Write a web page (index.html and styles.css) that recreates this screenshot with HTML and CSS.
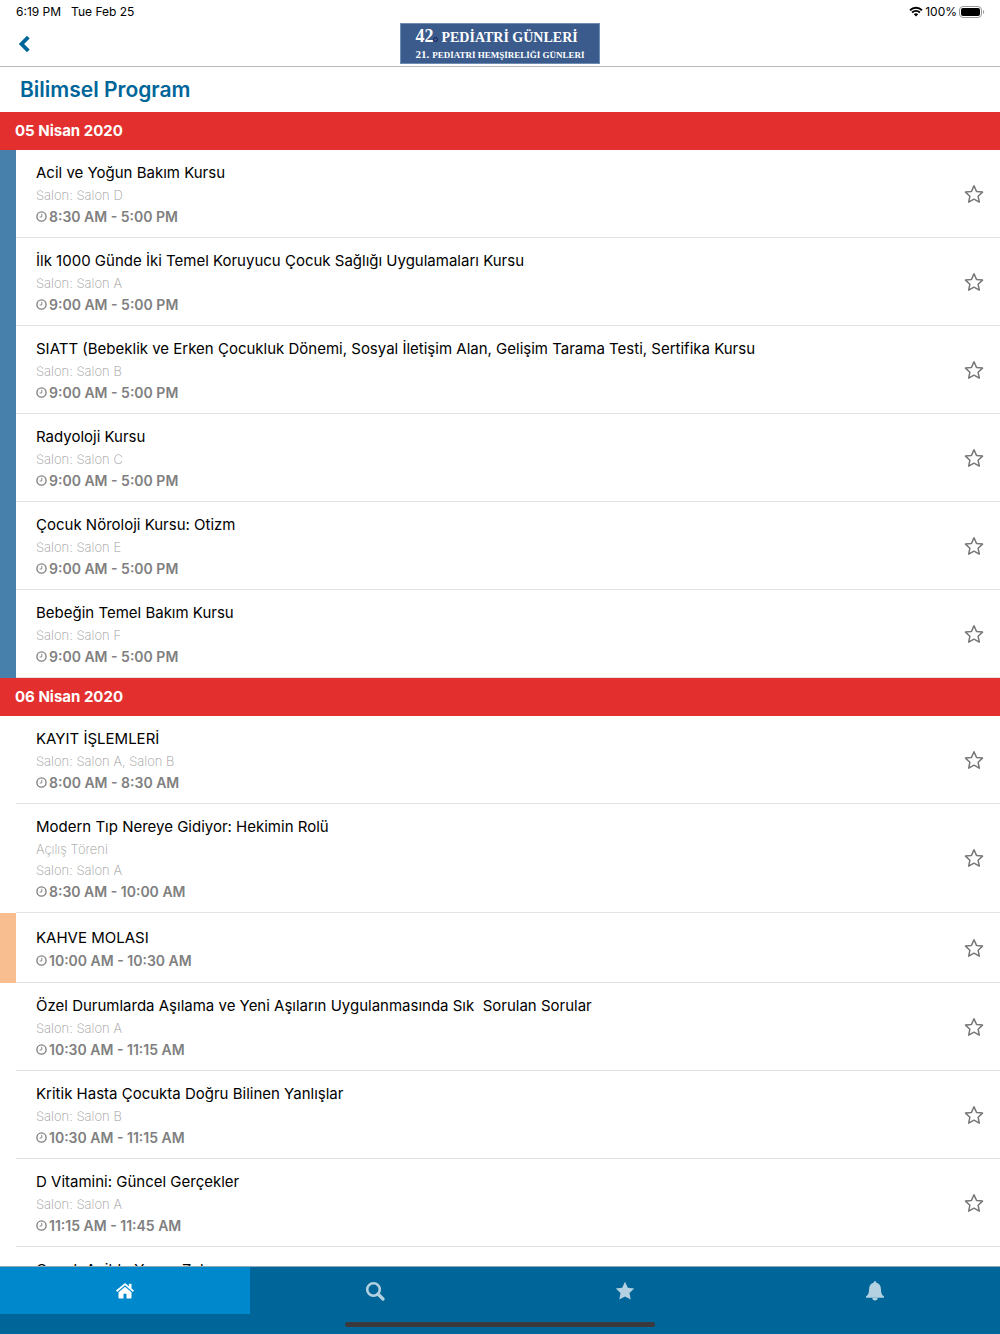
FILE: index.html
```html
<!DOCTYPE html>
<html lang="tr">
<head>
  <meta charset="UTF-8" />
  <meta name="viewport" content="width=device-width, initial-scale=1.0"/>
  <title>Bilimsel Program</title>
  <link rel="stylesheet" href="styles.css">
</head>
<body>

  <!-- Shared icons -->
  <svg class="hidden">
    <symbol id="star" viewBox="0 0 20 20">
      <path d="M10 1.800l2.500 5.600 6 .7-4.400 4.100 1.200 6-5.300-3-5.300 3 1.200-6L1.500 8.100l6-.7z" fill="none" stroke="#777" stroke-width="1.500" stroke-linejoin="round"/>
    </symbol>
    <symbol id="clock" viewBox="0 0 12 12">
      <circle cx="6" cy="6" r="5" fill="none" stroke="#808080" stroke-width="1.500"/>
      <path d="M6.300 3v3.500H4" fill="none" stroke="#808080" stroke-width="1"/>
    </symbol>
  </svg>

  <!-- Status Bar -->
  <div class="status">
    <span>6:19 PM</span>
    <span>Tue Feb 25</span>
    <div class="status-right">
      <svg width="14" height="11" viewBox="0 0 14 11">
        <path d="M1 4.200a8.700 8.700 0 0 1 12 0M3.100 6.500a5.600 5.600 0 0 1 7.800 0" fill="none" stroke="#000" stroke-width="1.900"/>
        <path d="M4.800 8.300a3.200 3.200 0 0 1 4.400 0L7 10.600z"/>
      </svg>
      <span>100%</span>
      <svg width="26" height="12" viewBox="0 0 26 12">
        <rect x=".5" y=".5" width="22" height="11" rx="3.500" fill="none" stroke="#999"/>
        <rect x="2" y="2" width="19" height="8" rx="2"/>
        <path d="M24 4v4c1.600-.6 1.600-3.400 0-4z" fill="#999"/>
      </svg>
    </div>
  </div>

  <!-- Header -->
  <header class="header">
    <button class="back" aria-label="Geri">
      <svg width="12" height="18" viewBox="0 0 12 18"><path d="M10.300 2.200L3.500 9l6.800 6.800" fill="none" stroke="#006699" stroke-width="3.800"/></svg>
    </button>
    <div class="logo">
      <div class="logo-top"><b>42</b><i></i> PEDİATRİ GÜNLERİ</div>
      <div class="logo-bottom"><b>21.</b> PEDİATRİ HEMŞİRELİĞİ GÜNLERİ</div>
    </div>
  </header>
  <h1>Bilimsel Program</h1>

  <!-- Program List -->
  <main>
    <h2>05 Nisan 2020</h2>
    <div class="row blue">
      <div class="info">
        <h3>Acil ve Yoğun Bakım Kursu</h3>
        <p>Salon: Salon D</p>
        <div class="time"><svg><use href="#clock"/></svg>8:30 AM - 5:00 PM</div>
      </div>
      <button class="fav" aria-label="Favori"><svg><use href="#star"/></svg></button>
    </div>
    <div class="row blue">
      <div class="info">
        <h3>İlk 1000 Günde İki Temel Koruyucu Çocuk Sağlığı Uygulamaları Kursu</h3>
        <p>Salon: Salon A</p>
        <div class="time"><svg><use href="#clock"/></svg>9:00 AM - 5:00 PM</div>
      </div>
      <button class="fav" aria-label="Favori"><svg><use href="#star"/></svg></button>
    </div>
    <div class="row blue">
      <div class="info">
        <h3>SIATT (Bebeklik ve Erken Çocukluk Dönemi, Sosyal İletişim Alan, Gelişim Tarama Testi, Sertifika Kursu</h3>
        <p>Salon: Salon B</p>
        <div class="time"><svg><use href="#clock"/></svg>9:00 AM - 5:00 PM</div>
      </div>
      <button class="fav" aria-label="Favori"><svg><use href="#star"/></svg></button>
    </div>
    <div class="row blue">
      <div class="info">
        <h3>Radyoloji Kursu</h3>
        <p>Salon: Salon C</p>
        <div class="time"><svg><use href="#clock"/></svg>9:00 AM - 5:00 PM</div>
      </div>
      <button class="fav" aria-label="Favori"><svg><use href="#star"/></svg></button>
    </div>
    <div class="row blue">
      <div class="info">
        <h3>Çocuk Nöroloji Kursu: Otizm</h3>
        <p>Salon: Salon E</p>
        <div class="time"><svg><use href="#clock"/></svg>9:00 AM - 5:00 PM</div>
      </div>
      <button class="fav" aria-label="Favori"><svg><use href="#star"/></svg></button>
    </div>
    <div class="row blue">
      <div class="info">
        <h3>Bebeğin Temel Bakım Kursu</h3>
        <p>Salon: Salon F</p>
        <div class="time"><svg><use href="#clock"/></svg>9:00 AM - 5:00 PM</div>
      </div>
      <button class="fav" aria-label="Favori"><svg><use href="#star"/></svg></button>
    </div>

    <h2>06 Nisan 2020</h2>
    <div class="row">
      <div class="info">
        <h3>KAYIT İŞLEMLERİ</h3>
        <p>Salon: Salon A, Salon B</p>
        <div class="time"><svg><use href="#clock"/></svg>8:00 AM - 8:30 AM</div>
      </div>
      <button class="fav" aria-label="Favori"><svg><use href="#star"/></svg></button>
    </div>
    <div class="row">
      <div class="info">
        <h3>Modern Tıp Nereye Gidiyor: Hekimin Rolü</h3>
        <p>Açılış Töreni</p>
        <p>Salon: Salon A</p>
        <div class="time"><svg><use href="#clock"/></svg>8:30 AM - 10:00 AM</div>
      </div>
      <button class="fav" aria-label="Favori"><svg><use href="#star"/></svg></button>
    </div>
    <div class="row orange">
      <div class="info">
        <h3>KAHVE MOLASI</h3>
        <div class="time"><svg><use href="#clock"/></svg>10:00 AM - 10:30 AM</div>
      </div>
      <button class="fav" aria-label="Favori"><svg><use href="#star"/></svg></button>
    </div>
    <div class="row">
      <div class="info">
        <h3>Özel Durumlarda Aşılama ve Yeni Aşıların Uygulanmasında Sık&nbsp; Sorulan Sorular</h3>
        <p>Salon: Salon A</p>
        <div class="time"><svg><use href="#clock"/></svg>10:30 AM - 11:15 AM</div>
      </div>
      <button class="fav" aria-label="Favori"><svg><use href="#star"/></svg></button>
    </div>
    <div class="row">
      <div class="info">
        <h3>Kritik Hasta Çocukta Doğru Bilinen Yanlışlar</h3>
        <p>Salon: Salon B</p>
        <div class="time"><svg><use href="#clock"/></svg>10:30 AM - 11:15 AM</div>
      </div>
      <button class="fav" aria-label="Favori"><svg><use href="#star"/></svg></button>
    </div>
    <div class="row">
      <div class="info">
        <h3>D Vitamini: Güncel Gerçekler</h3>
        <p>Salon: Salon A</p>
        <div class="time"><svg><use href="#clock"/></svg>11:15 AM - 11:45 AM</div>
      </div>
      <button class="fav" aria-label="Favori"><svg><use href="#star"/></svg></button>
    </div>
    <div class="row">
      <div class="info">
        <h3>Çocuk Acilde Yapay Zeka</h3>
      </div>
    </div>
  </main>

  <!-- Tab Bar -->
  <nav class="tabs">
    <a href="#" class="active" aria-label="Ana Sayfa">
      <svg width="18" height="16" viewBox="0 0 18 16"><path d="M9 0L0 7.600l1.100 1.300L9 2.300l7.900 6.600L18 7.600l-2.500-2.100V.8h-2.600v2.500z"/><path d="M9 3.700L2.500 9.200v5.600q0 .7.700.7h4.300v-4.700h3v4.700h4.300q.7 0 .7-.7V9.200z"/></svg>
    </a>
    <a href="#" aria-label="Ara">
      <svg width="20" height="20" viewBox="0 0 20 20"><circle cx="8.500" cy="8.500" r="6.300" fill="none" stroke="currentColor" stroke-width="2.600"/><path d="M13 13l5 5" stroke="currentColor" stroke-width="3.200" stroke-linecap="round"/></svg>
    </a>
    <a href="#" aria-label="Favoriler">
      <svg width="20" height="20" viewBox="0 0 20 20"><path d="M10 .8l2.800 6 6.400.8-4.700 4.500 1.200 6.400L10 15.400l-5.700 3.100 1.200-6.400L.8 7.600l6.400-.8z"/></svg>
    </a>
    <a href="#" aria-label="Bildirimler">
      <svg width="20" height="20" viewBox="0 0 20 20"><path d="M10 .3c.9 0 1.400.6 1.300 1.400 3 .7 4.600 3 4.600 6 0 4.200 1 6.300 3.100 7.900v1.100H1v-1.100c2.100-1.600 3.100-3.700 3.100-7.900 0-3 1.600-5.300 4.600-6C8.600.9 9.100.3 10 .3z"/><path d="M7.300 16.700h5.400a2.700 2.700 0 0 1-5.400 0z"/></svg>
    </a>
    <div class="home-bar"></div>
  </nav>

</body>
</html>
```

FILE: styles.css
```css
* {
  box-sizing: border-box;
}
body {
  margin: 0;
  height: 100vh;
  display: flex;
  flex-direction: column;
  background: #fff;
  color: #000;
  font-family: Inter, sans-serif;
}
h1, h2, h3, p {
  margin: 0;
}
button {
  border: none;
  background: none;
  padding: 0;
  cursor: pointer;
}
svg {
  display: block;
}
.hidden {
  display: none;
}

.status {
  display: flex;
  align-items: center;
  gap: 10px;
  height: 23px;
  padding: 0 15px 0 16px;
  font-size: 12px;
  font-weight: 400;
}
.status-right {
  display: flex;
  align-items: center;
  gap: 2px;
  margin-left: auto;
}

.header {
  display: grid;
  grid-template-columns: 1fr auto 1fr;
  align-items: center;
  height: 44px;
  padding: 0 18px 4px;
  border-bottom: 1px solid #bbb;
}
.back {
  width: 12px;
  height: 18px;
}
.logo {
  padding: 2px 14px;
  border: 1px solid #6f8cb3;
  background: #3a5b8c;
  color: #fff;
  font-family: "Liberation Serif", serif;
  font-weight: 700;
  white-space: nowrap;
}
.logo div {
  display: flex;
  align-items: baseline;
  gap: 3px;
}
.logo-top {
  font-size: 14px;
  line-height: 20px;
}
.logo-top b {
  font-size: 18px;
}
.logo-top i {
  width: 5px;
  height: 5px;
  margin-left: -3px;
  border: 1px solid #1d1d5c;
  border-radius: 50%;
}
.logo-bottom {
  font-size: 9px;
  line-height: 12px;
}
.logo-bottom b {
  font-size: 11px;
}

h1 {
  padding: 0 20px;
  color: #006699;
  font-size: 21px;
  font-weight: 600;
  line-height: 45px;
}

main {
  flex: 1;
  min-height: 0;
  overflow: hidden;
}
h2 {
  padding: 0 15px;
  background: #e3302f;
  color: #fff;
  font-size: 15px;
  font-weight: 700;
  line-height: 38px;
}
.row {
  display: flex;
  min-height: 70px;
}
.row::before {
  content: "";
  width: 16px;
}
.blue::before {
  background: #4880ac;
}
.orange::before {
  background: #f9be8f;
}
.info {
  display: flex;
  flex: 1;
  flex-direction: column;
  justify-content: center;
  padding: 11px 20px 10px;
  border-bottom: 1px solid #e3e3e3;
}
h3 {
  font-size: 15px;
  font-weight: 400;
  line-height: 24px;
}
.row:last-child .info {
  justify-content: start;
}
.info p {
  color: #999;
  font-size: 13px;
  font-weight: 200;
  line-height: 21px;
}
.time {
  display: flex;
  align-items: center;
  gap: 2px;
  color: #808080;
  font-size: 14px;
  font-weight: 600;
  line-height: 21px;
}
.time svg {
  width: 11px;
  height: 11px;
}
.fav {
  padding: 0 16px 0 0;
  border-bottom: 1px solid #e3e3e3;
}
.fav svg {
  width: 20px;
  height: 20px;
}

.tabs {
  display: grid;
  grid-template-columns: repeat(4, 1fr);
  grid-template-rows: 47px 20px;
  border-top: 1px solid #8fa9b8;
  background: #006699;
}
.tabs a {
  display: flex;
  align-items: center;
  justify-content: center;
  color: #b3d1e0;
}
.tabs a.active {
  background: #0088cc;
  color: #fff;
}
.tabs svg {
  fill: currentColor;
}
.home-bar {
  grid-column: 1 / -1;
  place-self: center;
  width: 31%;
  height: 5px;
  border-radius: 3px;
  background: #3a3a3c;
}
```
